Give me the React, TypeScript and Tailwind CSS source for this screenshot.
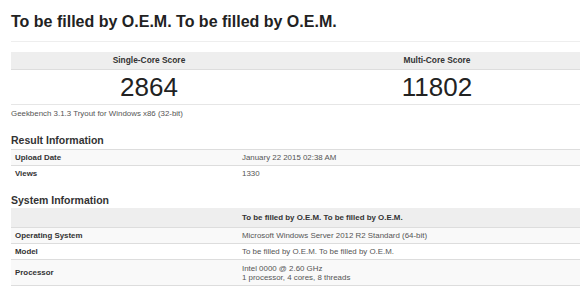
const resultRows = [
  { label: 'Upload Date', value: 'January 22 2015 02:38 AM' },
  { label: 'Views', value: '1330' },
]

const systemRows = [
  { label: 'Operating System', value: ['Microsoft Windows Server 2012 R2 Standard (64-bit)'], h: 'h-[16px]' },
  { label: 'Model', value: ['To be filled by O.E.M. To be filled by O.E.M.'], h: 'h-[16px]' },
  { label: 'Processor', value: ['Intel 0000 @ 2.60 GHz', '1 processor, 4 cores, 8 threads'], h: 'h-[26px]' },
]

function SectionTitle({ children, className }: { children: string; className: string }) {
  return (
    <h2 className={`text-[10.5px] font-bold leading-[16px] text-[#333] ${className}`}>{children}</h2>
  )
}

export default function App() {
  return (
    <div className="w-[580px] h-[287px] overflow-hidden bg-white pl-[11px] font-['Liberation_Sans',Arial,sans-serif] text-[#333]">
      <div className="h-[42px] border-b border-[#eee] pt-[12px]">
        <h1 className="text-[16px] font-bold leading-[20px] text-[#222]">
          To be filled by O.E.M. To be filled by O.E.M.
        </h1>
      </div>

      <div className="mt-[10px] grid w-[576px] grid-cols-[276px_300px]">
        <div className="flex h-[18px] items-center justify-center border-b border-[#ddd] bg-[#eee] text-[8.4px] font-bold">
          Single-Core Score
        </div>
        <div className="flex h-[18px] items-center justify-center border-b border-[#ddd] bg-[#eee] text-[8.4px] font-bold">
          Multi-Core Score
        </div>
        <div className="flex h-[35px] items-center justify-center border-b border-[#e6e6e6] text-[26px] leading-none text-[#222]">
          2864
        </div>
        <div className="flex h-[35px] items-center justify-center border-b border-[#e6e6e6] text-[26px] leading-none text-[#222]">
          11802
        </div>
      </div>

      <div className="flex h-[18px] items-center text-[7.9px] text-[#555]">
        Geekbench 3.1.3 Tryout for Windows x86 (32-bit)
      </div>

      <SectionTitle className="h-[26px] pt-[9px]">Result Information</SectionTitle>
      <div className="text-[7.9px]">
        {resultRows.map((r, i) => (
          <div
            key={r.label}
            className={`grid h-[16px] grid-cols-[227px_1fr] items-center border-t border-[#ddd] ${i % 2 === 0 ? 'bg-[#f9f9f9]' : ''}`}
          >
            <div className="pl-[4px] font-bold">{r.label}</div>
            <div className="pl-[4px] text-[#555]">{r.value}</div>
          </div>
        ))}
      </div>

      <SectionTitle className="h-[27px] pt-[11px]">System Information</SectionTitle>
      <div className="text-[7.9px]">
        <div className="grid h-[20px] grid-cols-[227px_1fr] items-center border-b border-[#ddd] bg-[#eee]">
          <div />
          <div className="pl-[4px] font-bold">To be filled by O.E.M. To be filled by O.E.M.</div>
        </div>
        {systemRows.map((r, i) => (
          <div
            key={r.label}
            className={`grid ${r.h} grid-cols-[227px_1fr] items-center border-b border-[#ddd] ${i % 2 === 0 ? 'bg-[#f9f9f9]' : ''}`}
          >
            <div className="pl-[4px] font-bold">{r.label}</div>
            <div className="pl-[4px] leading-[9px] text-[#555]">
              {r.value.map((v) => (
                <div key={v}>{v}</div>
              ))}
            </div>
          </div>
        ))}
      </div>
    </div>
  )
}
